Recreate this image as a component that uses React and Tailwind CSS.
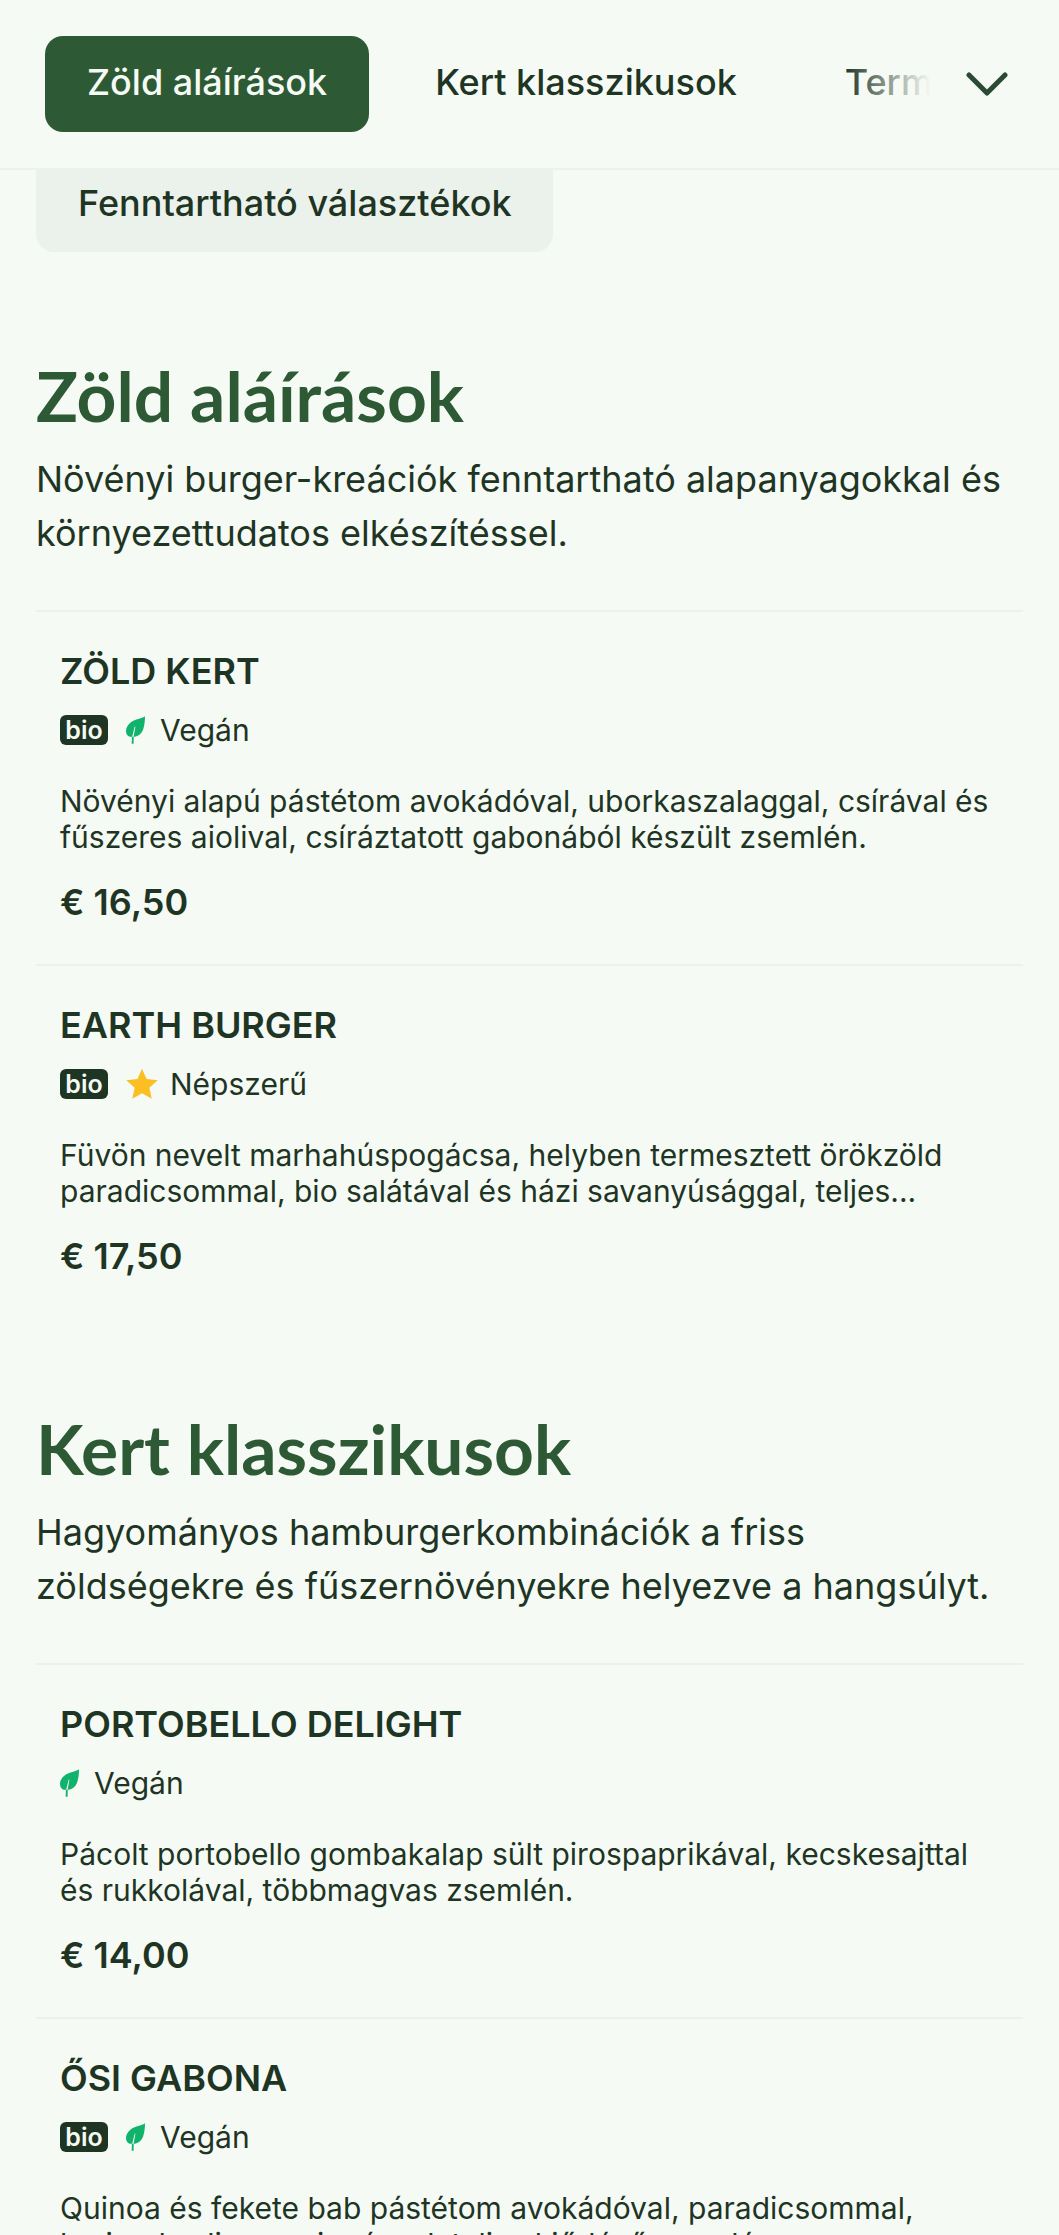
import React from "react";

const SANS = "font-['Inter','Liberation_Sans',sans-serif]";

const Leaf = () => (
  <svg viewBox="0 0 20 28" preserveAspectRatio="none" className="h-[28px] w-[19px] shrink-0">
    <path
      fill="#10b26c"
      d="M20 .3C16 3 10 3 5.5 6C2 8.5 0 11.5 0 15C0 18 1.5 20 4 20.8L6.5 20.8L9.2 10.5L9.9 10.7L8 20.8C12 20.8 16 18.5 18 13.5C19.5 9.5 20 4.5 20 .3ZM6.2 20.8L6 27.8H8L8.1 20.8Z"
    />
  </svg>
);

const Star = () => (
  <svg viewBox="0 0 24 24" className="h-[32px] w-[32px] shrink-0">
    <path
      fill="#fbbf24"
      d="M12 .6l3.4 7.7 8.4.9-6.3 5.6 1.8 8.3L12 19l-7.3 4.1 1.8-8.3L.2 9.2l8.4-.9z"
    />
  </svg>
);

const Bio = () => (
  <span className="flex h-[30px] w-[48px] items-center justify-center rounded-[6px] bg-[#1f3524] text-[25px] leading-none font-semibold text-[#f5faf5]">
    bio
  </span>
);

const MenuItem = ({ name, bio, tag, star, desc, price }) => (
  <div className="h-[354px] overflow-hidden border-t-2 border-[#ebf2ec] px-6 pt-[37px]">
    <h3 className="text-[36px] leading-[44px] font-semibold text-[#1f3524]">{name}</h3>
    <div className="mt-[22px] flex h-[30px] items-center gap-[18px]">
      {bio && <Bio />}
      <div className={`flex items-center text-[30px] leading-[30px] text-[#1f3524] ${star ? "gap-[12px]" : "gap-[15px]"}`}>
        {star ? <Star /> : <Leaf />}
        <span>{tag}</span>
      </div>
    </div>
    <p className="mt-[38px] text-[30px] leading-[36px] text-[#1f3524]">{desc}</p>
    <div className="mt-[25px] text-[36px] leading-[44px] font-semibold text-[#1f3524]">{price}</div>
  </div>
);

const Section = ({ title, text, children, className }) => (
  <section className={className}>
    <h2 className="font-['Lato',sans-serif] text-[69.5px] leading-[80px] font-bold text-[#2d5a34]">
      {title}
    </h2>
    <p className="mt-[17px] text-[36px] leading-[54px] text-[#1f3524]">{text}</p>
    <div className="mt-[50px]">{children}</div>
  </section>
);

export default function App() {
  return (
    <div className={`h-[2235px] overflow-hidden bg-[#f5faf5] ${SANS}`}>
      <header className="relative z-10 flex h-[170px] items-center border-b-2 border-[#ebf2ec] bg-[#f5faf5] pl-[45px] pr-[51px]">
        <nav className="relative flex flex-1 gap-6 overflow-hidden text-[36px] font-medium text-[#1f3524]">
          <a className="flex h-[96px] shrink-0 items-center rounded-[18px] bg-[#2d5a34] px-[42px] pb-1 text-[#f5faf5]">
            Zöld aláírások
          </a>
          <a className="flex h-[96px] shrink-0 items-center px-[42px] pb-1">Kert klasszikusok</a>
          <a className="flex h-[96px] shrink-0 items-center px-[42px] pb-1">Termelői</a>
          <div className="absolute inset-y-0 right-0 w-[96px] bg-gradient-to-l from-[#f5faf5] from-10% to-transparent" />
        </nav>
        <svg viewBox="0 0 42 24" className="ml-[26px] h-[24px] w-[42px] shrink-0">
          <path d="M3 3L21 21L39 3" fill="none" stroke="#2a4a33" strokeWidth="5" strokeLinecap="round" strokeLinejoin="round" />
        </svg>
      </header>

      <div className="px-9">
        <div className="-mt-4 flex h-[98px] w-[517px] items-center rounded-[18px] bg-[#ebf2ec] px-[42px] text-[36px] font-medium whitespace-nowrap text-[#1f3524]">
          Fenntartható választékok
        </div>

        <Section title="Zöld aláírások" className="mt-[103px]" text="Növényi burger-kreációk fenntartható alapanyagokkal és környezettudatos elkészítéssel.">
          <MenuItem
            name="ZÖLD KERT"
            bio
            tag="Vegán"
            desc="Növényi alapú pástétom avokádóval, uborkaszalaggal, csírával és fűszeres aiolival, csíráztatott gabonából készült zsemlén."
            price="€ 16,50"
          />
          <MenuItem
            name="EARTH BURGER"
            bio
            star
            tag="Népszerű"
            desc="Füvön nevelt marhahúspogácsa, helyben termesztett örökzöld paradicsommal, bio salátával és házi savanyúsággal, teljes..."
            price="€ 17,50"
          />
        </Section>

        <Section title="Kert klasszikusok" className="mt-[90px]" text="Hagyományos hamburgerkombinációk a friss zöldségekre és fűszernövényekre helyezve a hangsúlyt.">
          <MenuItem
            name="PORTOBELLO DELIGHT"
            tag="Vegán"
            desc="Pácolt portobello gombakalap sült pirospaprikával, kecskesajttal és rukkolával, többmagvas zsemlén."
            price="€ 14,00"
          />
          <MenuItem
            name="ŐSI GABONA"
            bio
            tag="Vegán"
            desc="Quinoa és fekete bab pástétom avokádóval, paradicsommal, koriander-lime majonézzel, teljes kiőrlésű zsemlén."
            price="€ 15,00"
          />
        </Section>
      </div>
    </div>
  );
}
